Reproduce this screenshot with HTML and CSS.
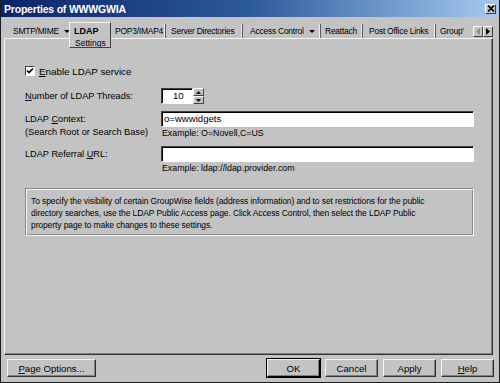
FILE: index.html
```html
<!DOCTYPE html>
<html lang="en">
<head>
    <meta charset="UTF-8">
    <title>Properties of WWWGWIA</title>
    <link rel="stylesheet" href="styles.css">
</head>
<body>
    <div class="window">
        <div class="titlebar">
            <span class="title">Properties of WWWGWIA</span>
            <span class="close">
                <svg width="8" height="7" viewBox="0 0 8 7"><path d="M1 0.5 L7 6.5 M7 0.5 L1 6.5" stroke="#000" stroke-width="1.6"/></svg>
            </span>
        </div>

        <div class="tabs">
            <div class="tab w-smtp">SMTP/MIME <span class="caret"></span></div>
            <div class="tab active"><b>LDAP</b><span class="sub">Settings</span></div>
            <div class="tab w-pop">POP3/IMAP4</div>
            <div class="tab w-dirs">Server Directories</div>
            <div class="tab w-access">Access Control <span class="caret"></span></div>
            <div class="tab w-reattach">Reattach</div>
            <div class="tab w-links">Post Office Links</div>
            <div class="tab w-group">Group'</div>
            <div class="tab-scroll">
                <span class="scroll-btn off"><svg width="4" height="7" viewBox="0 0 4 7"><path d="M4 0 L0 3.5 L4 7Z" fill="#8a8a8a"/></svg></span>
                <span class="scroll-btn"><svg width="4" height="7" viewBox="0 0 4 7"><path d="M0 0 L4 3.5 L0 7Z" fill="#000"/></svg></span>
            </div>
        </div>

        <div class="panel">
            <label class="check-row">
                <span class="checkbox">
                    <svg width="8" height="8" viewBox="0 0 8 8"><path d="M1 3.5 L3 5.5 L7 1.5" stroke="#000" stroke-width="1.7" fill="none"/></svg>
                </span>
                <span><u>E</u>nable LDAP service</span>
            </label>

            <div class="row row-threads">
                <div class="label"><u>N</u>umber of LDAP Threads:</div>
                <div class="spinner">
                    <span class="spin-value">10</span>
                    <span class="spin-btns">
                        <span class="spin-btn"><svg width="5" height="3" viewBox="0 0 5 3"><path d="M0 3 L2.5 0 L5 3Z" fill="#000"/></svg></span>
                        <span class="spin-btn"><svg width="5" height="3" viewBox="0 0 5 3"><path d="M0 0 L2.5 3 L5 0Z" fill="#000"/></svg></span>
                    </span>
                </div>
            </div>

            <div class="row row-context">
                <div class="label two-line">LDAP <u>C</u>ontext:<br>(Search Root or Search Base)</div>
                <div class="field">
                    <div class="input">o=wwwidgets</div>
                    <div class="hint">Example: O=Novell,C=US</div>
                </div>
            </div>

            <div class="row row-referral">
                <div class="label">LDAP Referral <u>U</u>RL:</div>
                <div class="field">
                    <div class="input"></div>
                    <div class="hint">Example: ldap://ldap.provider.com</div>
                </div>
            </div>

            <div class="note">
                <div>To specify the visibility of certain GroupWise fields (address information) and to set restrictions for the public</div>
                <div>directory searches, use the LDAP Public Access page. Click Access Control, then select the LDAP Public</div>
                <div>property page to make changes to these settings.</div>
            </div>
        </div>

        <div class="footer">
            <button class="btn btn-wide"><u>P</u>age Options...</button>
            <div class="footer-right">
                <button class="btn default">OK</button>
                <button class="btn">Cancel</button>
                <button class="btn">Apply</button>
                <button class="btn"><u>H</u>elp</button>
            </div>
        </div>
    </div>
</body>
</html>
```

FILE: styles.css
```css
body {
    margin: 0;
    font-family: "Liberation Sans", Arial, sans-serif;
    background: #c3c3c3;
}

.window {
    width: 500px;
    height: 383px;
    box-sizing: border-box;
    border: 1px solid #1c1c1c;
    border-top: none;
    background: #c3c3c3;
    display: flex;
    flex-direction: column;
}

.titlebar {
    height: 17px;
    display: flex;
    align-items: center;
    justify-content: space-between;
    padding: 0 3px 0 3px;
    background: linear-gradient(to right, #0a246a 0%, #2d5a9c 50%, #a6caf0 100%);
}

.title {
    color: #fff;
    font-weight: bold;
    font-size: 10.5px;
    letter-spacing: -0.2px;
}

.close {
    width: 11px;
    height: 10px;
    display: flex;
    align-items: center;
    justify-content: center;
    background: #c3c3c3;
    border: 1px solid;
    border-color: #fff #404040 #404040 #fff;
    box-sizing: border-box;
}

/* tab strip */
.tabs {
    height: 16px;
    margin-top: 5px;
    padding-left: 7px;
    display: flex;
    align-items: flex-end;
    font-size: 8.5px;
    letter-spacing: -0.25px;
    color: #000;
}

.tab {
    height: 14px;
    box-sizing: border-box;
    display: flex;
    align-items: center;
    padding-left: 4px;
    border-right: 1px solid #5a5a5a;
    box-shadow: inset -1px 0 0 #ececec;
    white-space: nowrap;
    overflow: hidden;
}

.w-smtp { width: 61px; padding-left: 5px; border-right: none; box-shadow: none; }
.w-pop { width: 55px; }
.w-dirs { width: 77px; padding-left: 5px; }
.w-access { width: 78px; padding-left: 7px; }
.w-reattach { width: 42px; }
.w-links { width: 73px; padding-left: 6px; }
.w-group { width: 33px; border-right: none; box-shadow: none; }

.caret {
    display: inline-block;
    margin-left: 5px;
    border-left: 3px solid transparent;
    border-right: 3px solid transparent;
    border-top: 3px solid #000;
}

.tab.active {
    position: relative;
    z-index: 1;
    width: 42px;
    height: 26px;
    margin-bottom: -10px;
    padding: 2px 0 0 4px;
    flex-direction: column;
    align-items: flex-start;
    justify-content: flex-start;
    line-height: 12px;
    background: #c3c3c3;
    border: 1px solid;
    border-color: #f4f4f4 #404040 #404040 #f4f4f4;
    box-shadow: none;
    letter-spacing: 0;
}

.tab.active b {
    font-size: 9px;
}

.tab.active .sub {
    padding-left: 1px;
}

.tab-scroll {
    display: flex;
    margin-left: 4px;
    margin-bottom: 1px;
}

.scroll-btn {
    width: 10px;
    height: 11px;
    box-sizing: border-box;
    display: flex;
    align-items: center;
    justify-content: center;
    border: 1px solid;
    border-color: #fff #404040 #404040 #fff;
}

/* page body */
.panel {
    height: 317px;
    box-sizing: border-box;
    margin: 0 6px 0 3px;
    padding: 26px 16px 0 20px;
    border: 1px solid;
    border-color: #f4f4f4 #303030 #303030 #f4f4f4;
    box-shadow: inset -1px -1px 0 #808080;
    font-size: 9.2px;
    color: #000;
}

.check-row {
    display: flex;
    align-items: center;
    gap: 4px;
    height: 12px;
    font-size: 9.8px;
}

.checkbox {
    width: 10px;
    height: 10px;
    box-sizing: border-box;
    background: #fff;
    border: 1px solid;
    border-color: #404040 #fff #fff #404040;
    display: flex;
    align-items: center;
    justify-content: center;
}

.row {
    display: grid;
    grid-template-columns: 136px 313px;
}

.label {
    white-space: nowrap;
}

.row-threads {
    margin-top: 11px;
    align-items: center;
}

.spinner {
    display: flex;
    height: 16px;
}

.spin-value {
    width: 32px;
    box-sizing: border-box;
    background: #fff;
    border: 1px solid;
    border-color: #404040 #fff #fff #404040;
    box-shadow: inset 1px 1px 0 #000;
    padding-left: 11px;
    line-height: 14px;
    font-size: 9.6px;
}

.spin-btns {
    display: flex;
    flex-direction: column;
}

.spin-btn {
    width: 11px;
    height: 8px;
    box-sizing: border-box;
    display: flex;
    align-items: center;
    justify-content: center;
    border: 1px solid;
    border-color: #fff #404040 #404040 #fff;
}

.row-context {
    margin-top: 7px;
}

.two-line {
    line-height: 13px;
    padding-top: 2px;
}

.input {
    height: 16px;
    box-sizing: border-box;
    background: #fff;
    border: 1px solid;
    border-color: #404040 #fff #fff #404040;
    box-shadow: inset 1px 1px 0 #000;
    padding-left: 2px;
    line-height: 14px;
    font-size: 9.6px;
}

.hint {
    height: 12px;
    line-height: 12px;
    font-size: 8.8px;
    padding-left: 1px;
}

.row-referral {
    margin-top: 7px;
}

.row-referral .label {
    line-height: 16px;
}

.note {
    margin-top: 14px;
    width: 449px;
    height: 48px;
    box-sizing: border-box;
    padding: 6px 4px 0 5px;
    border: 1px solid;
    border-color: #8a8a8a #f4f4f4 #f4f4f4 #8a8a8a;
    box-shadow: inset 1px 1px 0 #f4f4f4, inset -1px -1px 0 #8a8a8a;
    font-size: 8.5px;
    line-height: 12px;
    letter-spacing: -0.1px;
    white-space: nowrap;
}

/* bottom buttons */
.footer {
    display: flex;
    justify-content: space-between;
    padding: 4px 5px 0 6px;
}

.footer-right {
    display: flex;
    gap: 5px;
}

.btn {
    width: 53px;
    height: 18px;
    padding: 0;
    box-sizing: border-box;
    font-family: "Liberation Sans", Arial, sans-serif;
    font-size: 9.6px;
    color: #000;
    background: #c3c3c3;
    border: 1px solid;
    border-color: #f4f4f4 #303030 #303030 #f4f4f4;
    box-shadow: inset -1px -1px 0 #808080;
}

.btn-wide {
    width: 89px;
}

.btn.default {
    outline: 1px solid #000;
    outline-offset: 0;
    border-color: #f4f4f4 #000 #000 #f4f4f4;
}
```
